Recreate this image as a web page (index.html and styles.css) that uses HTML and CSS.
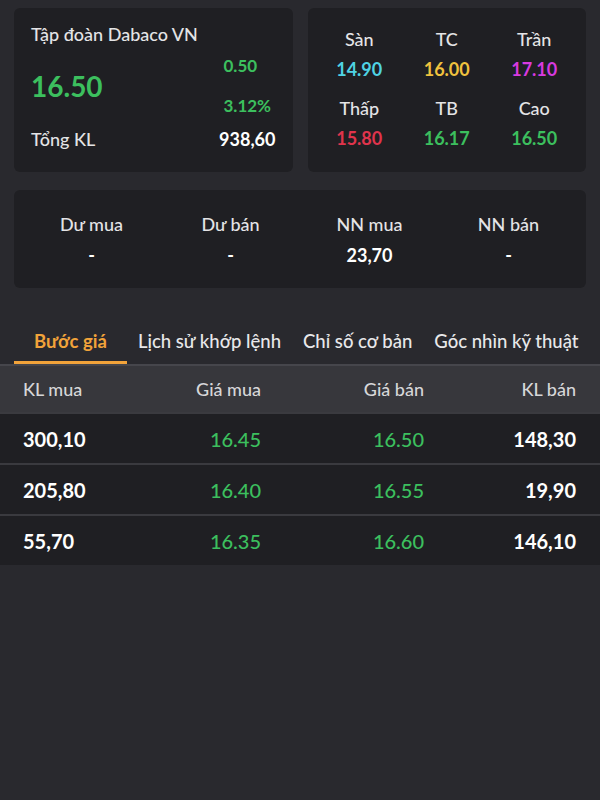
FILE: index.html
```html
<!DOCTYPE html>
<html lang="vi">

<head>
    <meta charset="UTF-8">
    <meta name="viewport" content="width=device-width, initial-scale=1.0">
    <title>Dabaco VN</title>
    <link rel="stylesheet" href="styles.css">
</head>

<body>
    <div class="top">
        <!-- price -->
        <div class="card quote">
            <p class="name">Tập đoàn Dabaco VN</p>
            <div class="price-row">
                <span class="price up">16.50</span>
                <div class="change up">
                    <p>0.50</p>
                    <p>3.12%</p>
                </div>
            </div>
            <div class="vol-row">
                <span>Tổng KL</span>
                <span class="num">938,60</span>
            </div>
        </div>
        <!-- ref prices -->
        <div class="card refs">
            <div class="cell"><p class="lbl">Sàn</p><p class="val floor">14.90</p></div>
            <div class="cell"><p class="lbl">TC</p><p class="val ref">16.00</p></div>
            <div class="cell"><p class="lbl">Trần</p><p class="val ceil">17.10</p></div>
            <div class="cell"><p class="lbl">Thấp</p><p class="val down">15.80</p></div>
            <div class="cell"><p class="lbl">TB</p><p class="val up">16.17</p></div>
            <div class="cell"><p class="lbl">Cao</p><p class="val up">16.50</p></div>
        </div>
    </div>

    <div class="card extra">
        <div class="cell"><p class="lbl">Dư mua</p><p class="val">-</p></div>
        <div class="cell"><p class="lbl">Dư bán</p><p class="val">-</p></div>
        <div class="cell"><p class="lbl">NN mua</p><p class="val">23,70</p></div>
        <div class="cell"><p class="lbl">NN bán</p><p class="val">-</p></div>
    </div>

    <!-- tabs -->
    <div class="tabs">
        <span class="tab active">Bước giá</span>
        <span class="tab">Lịch sử khớp lệnh</span>
        <span class="tab">Chỉ số cơ bản</span>
        <span class="tab">Góc nhìn kỹ thuật</span>
    </div>

    <div class="book">
        <div class="row head">
            <span>KL mua</span>
            <span>Giá mua</span>
            <span>Giá bán</span>
            <span>KL bán</span>
        </div>
        <div class="row">
            <span class="num">300,10</span>
            <span class="up">16.45</span>
            <span class="up">16.50</span>
            <span class="num">148,30</span>
        </div>
        <div class="row">
            <span class="num">205,80</span>
            <span class="up">16.40</span>
            <span class="up">16.55</span>
            <span class="num">19,90</span>
        </div>
        <div class="row">
            <span class="num">55,70</span>
            <span class="up">16.35</span>
            <span class="up">16.60</span>
            <span class="num">146,10</span>
        </div>
    </div>
</body>

</html>
```

FILE: styles.css
```css
* {
    margin: 0;
    padding: 0;
    box-sizing: border-box;
}

body {
    background: #29292e;
    color: #e4e4e6;
    font-family: Lato, "Noto Sans", sans-serif;
    font-size: 18px;
    font-weight: 500;
    width: 600px;
    height: 800px;
    overflow: hidden;
}

.up {
    color: #3cbf5e;
}

.down {
    color: #e0344c;
}

.floor {
    color: #4fd3e4;
}

.ref {
    color: #f0c23e;
}

.ceil {
    color: #d83ae0;
}

.num {
    color: #fff;
    font-weight: 700;
}

/* cards */
.top {
    display: grid;
    grid-template-columns: 1fr 1fr;
    gap: 15px;
    padding: 8px 14px 0;
}

.card {
    background: #1f1f23;
    border-radius: 6px;
}

.quote {
    height: 164px;
    padding: 14px 17px 0;
}

.name {
    line-height: 24px;
}

.price-row {
    display: flex;
    justify-content: space-between;
    align-items: center;
    margin-top: 9px;
}

.price {
    font-size: 28px;
    font-weight: 700;
}

.change {
    width: 52px;
    font-weight: 700;
    font-size: 17px;
}

.change p {
    line-height: 22px;
}

.change p + p {
    margin-top: 18px;
}

.vol-row {
    display: flex;
    justify-content: space-between;
    margin-top: 10px;
    line-height: 24px;
}

.refs {
    height: 164px;
    display: grid;
    grid-template-columns: repeat(3, 1fr);
    padding: 19px 8px 0;
    row-gap: 15px;
    align-content: start;
}

.cell {
    text-align: center;
}

.lbl {
    line-height: 24px;
}

.val {
    line-height: 24px;
    margin-top: 6px;
    font-weight: 700;
}

.extra {
    height: 98px;
    margin: 18px 14px 0;
    display: grid;
    grid-template-columns: repeat(4, 1fr);
    padding: 22px 8px 0;
    align-content: start;
}

.extra .val {
    color: #fff;
    margin-top: 7px;
}

/* tabs */
.tabs {
    display: flex;
    padding: 0 0 0 14px;
    margin-top: 36px;
    height: 40px;
}

.tab {
    padding: 0 11px;
    line-height: 34px;
    font-size: 18.5px;
    color: #e8e8ea;
    white-space: nowrap;
}

.tab.active {
    padding: 0 20px;
    color: #f2a33a;
    font-weight: 700;
    border-bottom: 3px solid #f2a33a;
}

/* order book */
.book {
    border-top: 2px solid #46464c;
}

.row {
    display: grid;
    grid-template-columns: 80px 158px 163px 1fr;
    padding: 0 24px 0 23px;
    height: 51px;
    align-items: center;
    background: #1f1f23;
    font-size: 20px;
    border-top: 2px solid #3a3a3f;
}

.row span + span {
    text-align: right;
}

.row.head {
    height: 46px;
    border-top: 0;
    background: #37373c;
    font-size: 18px;
    color: #d6d6d8;
}
```
